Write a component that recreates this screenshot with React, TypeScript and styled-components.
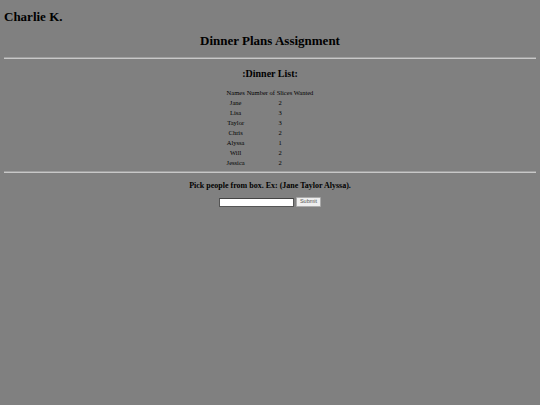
import styled, { createGlobalStyle } from 'styled-components';

const GlobalStyle = createGlobalStyle`
  html, body {
    margin: 0;
    background: #808080;
  }
  body {
    padding: 4px;
    font-family: "Liberation Serif", "Times New Roman", serif;
    color: #000;
  }
`;

const guests = [
  { name: 'Jane', slices: 2 },
  { name: 'Lisa', slices: 3 },
  { name: 'Taylor', slices: 3 },
  { name: 'Chris', slices: 2 },
  { name: 'Alyssa', slices: 1 },
  { name: 'Will', slices: 2 },
  { name: 'Jessica', slices: 2 },
];

export default function App() {
  return (
    <Page>
      <GlobalStyle />
      <Author>Charlie K.</Author>
      <Title>Dinner Plans Assignment</Title>
      <Rule $top={9} />
      <ListHeading>:Dinner List:</ListHeading>
      <Table>
        <thead>
          <tr>
            <HeadCell>Names</HeadCell>
            <HeadCell>Number of Slices Wanted</HeadCell>
          </tr>
        </thead>
        <tbody>
          {guests.map((g) => (
            <tr key={g.name}>
              <Cell>{g.name}</Cell>
              <Cell>{g.slices}</Cell>
            </tr>
          ))}
        </tbody>
      </Table>
      <Rule $top={3} />
      <Prompt>Pick people from box. Ex: (Jane Taylor Alyssa).</Prompt>
      <Form onSubmit={(e) => e.preventDefault()}>
        <TextBox type="text" />
        <SubmitButton type="submit">Submit</SubmitButton>
      </Form>
    </Page>
  );
}

const Page = styled.div`
  display: flex;
  flex-direction: column;
`;

const Author = styled.h2`
  font-size: 13px;
  line-height: 15px;
  font-weight: bold;
  margin: 5px 0 0;
`;

const Title = styled.h2`
  font-size: 13px;
  line-height: 15px;
  font-weight: bold;
  text-align: center;
  margin: 9px 0 0;
`;

const Rule = styled.hr<{ $top?: number }>`
  width: 100%;
  height: 0;
  margin: ${(p) => p.$top ?? 8}px 0 0;
  border: none;
  border-top: 1px solid #a0a0a0;
  border-bottom: 1px solid #c8c8c8;
`;

const ListHeading = styled.h3`
  font-size: 10px;
  line-height: 12px;
  font-weight: bold;
  text-align: center;
  margin: 9px 0 0;
`;

const Table = styled.table`
  margin: 8px auto 0;
  border-collapse: separate;
  border-spacing: 1px 0;
  font-size: 6.5px;
`;

const HeadCell = styled.th`
  font-weight: normal;
  height: 10px;
  padding: 0 0.5px;
  line-height: 10px;
  text-align: center;
`;

const Cell = styled.td`
  height: 10px;
  padding: 0;
  line-height: 10px;
  text-align: center;
`;

const Prompt = styled.p`
  font-size: 8px;
  line-height: 10px;
  font-weight: bold;
  text-align: center;
  margin: 8px 0 0;
`;

const Form = styled.form`
  display: flex;
  justify-content: center;
  align-items: center;
  gap: 2px;
  margin-top: 6px;
`;

const TextBox = styled.input`
  width: 75px;
  height: 9px;
  box-sizing: border-box;
  padding: 0;
  border: 1px solid #555;
  border-top-color: #444;
  background: #fff;
  font-size: 6px;
`;

const SubmitButton = styled.button`
  height: 10px;
  box-sizing: border-box;
  padding: 0 3px;
  font-size: 5.5px;
  font-family: "Liberation Sans", Arial, sans-serif;
  color: #555;
  background: #eee;
  border: 1px solid #aaa;
  border-radius: 1px;
  line-height: 1;
`;
